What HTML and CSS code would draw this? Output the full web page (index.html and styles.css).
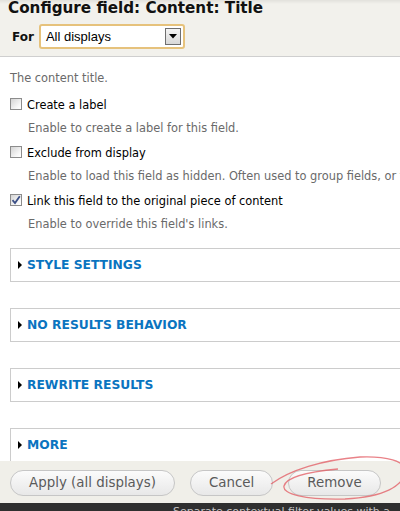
FILE: index.html
```html
<!DOCTYPE html>
<html>
<head>
<meta charset="utf-8">
<link rel="stylesheet" href="styles.css">
</head>
<body>
<div class="page">
  <header class="head">
    <h1 class="title">Configure field: Content: Title</h1>
    <div class="for-row">
      <span class="for">For</span>
      <div class="select">
        <span class="sel-text">All displays</span>
        <span class="sel-btn"><svg width="8" height="5" viewBox="0 0 8 5"><path d="M0 0H8L4 4.5Z" fill="#000"/></svg></span>
      </div>
    </div>
  </header>
  <main class="content">
    <p class="desc lead">The content title.</p>
    <div class="item">
      <div class="check-row"><span class="cb"></span><span class="label">Create a label</span></div>
      <p class="desc sub">Enable to create a label for this field.</p>
    </div>
    <div class="item">
      <div class="check-row"><span class="cb"></span><span class="label">Exclude from display</span></div>
      <p class="desc sub">Enable to load this field as hidden. Often used to group fields, or to use as token in another field.</p>
    </div>
    <div class="item">
      <div class="check-row"><span class="cb checked"><svg width="10" height="10" viewBox="0 0 10 10"><path d="M1.5 5.2L4 8L8.8 1.2" fill="none" stroke="#3b4f86" stroke-width="1.8"/></svg></span><span class="label">Link this field to the original piece of content</span></div>
      <p class="desc sub">Enable to override this field's links.</p>
    </div>
    <div class="fs-list">
      <div class="fs"><span class="tri"></span><span class="legend">STYLE SETTINGS</span></div>
      <div class="fs"><span class="tri"></span><span class="legend">NO RESULTS BEHAVIOR</span></div>
      <div class="fs"><span class="tri"></span><span class="legend">REWRITE RESULTS</span></div>
      <div class="fs"><span class="tri"></span><span class="legend">MORE</span></div>
    </div>
  </main>
  <footer class="bar">
    <button class="btn">Apply (all displays)</button>
    <button class="btn">Cancel</button>
    <button class="btn">Remove</button>
  </footer>
  <div class="strip">Separate contextual filter values with a</div>
  <svg class="annot" width="400" height="511" viewBox="0 0 400 511">
    <path d="M271 484 C290 470 322 460 360 457 C386 456 406 461 405 471 C404 486 384 497 345 499 C305 500 282 494 284 486 C286 478 306 472 338 469" fill="none" stroke="rgba(226,88,96,0.75)" stroke-width="1.3"/>
  </svg>
</div>
</body>
</html>
```

FILE: styles.css
```css
html, body {
  margin: 0;
  padding: 0;
}
body {
  width: 400px;
  height: 511px;
  overflow: hidden;
  background: #fff;
  font-family: "DejaVu Sans", Verdana, sans-serif;
}
.page {
  position: relative;
  width: 400px;
  height: 511px;
  overflow: hidden;
  white-space: nowrap;
}
.head {
  background: linear-gradient(#e2e1dc 0px, #f2f1ec 4px, #f2f1ec 100%);
  padding: 0 0 7px 8px;
  border-bottom: 1px solid #cfcfcf;
}
.title {
  margin: 0;
  font: bold 15.2px/16px "DejaVu Sans", Verdana, sans-serif;
  color: #111;
}
.for-row {
  display: flex;
  align-items: center;
  margin-top: 8px;
  padding-left: 4px;
  gap: 5px;
}
.for {
  font: bold 12px/14px "DejaVu Sans", Verdana, sans-serif;
  color: #111;
}
.select {
  box-sizing: border-box;
  width: 146px;
  height: 25px;
  border: 2px solid #e6c27c;
  border-radius: 3px;
  background: #fff;
  display: flex;
  align-items: center;
  padding-left: 5px;
}
.sel-text {
  font: 13px/16px "Liberation Sans", Arial, sans-serif;
  color: #000;
}
.sel-btn {
  margin-left: auto;
  margin-right: 2px;
  box-sizing: border-box;
  width: 16px;
  height: 17px;
  border: 1px solid #6f6f6f;
  background: linear-gradient(#f4f4f4, #d8d8d8);
  display: flex;
  align-items: center;
  justify-content: center;
}
.content {
  box-sizing: border-box;
  height: 404px;
  overflow: hidden;
  padding: 14px 0 0 10px;
}
.desc {
  margin: 0;
  font: 11.4px/14px "DejaVu Sans", Verdana, sans-serif;
  color: #6a6a6a;
}
.lead {
  margin-bottom: 13px;
}
.item {
  margin-bottom: 11px;
}
.check-row {
  display: flex;
  align-items: center;
  height: 14px;
}
.cb {
  box-sizing: border-box;
  width: 12px;
  height: 12px;
  margin-top: -2px;
  margin-right: 5px;
  border: 1px solid #8c8c8c;
  background: linear-gradient(135deg, #d4d4d4, #f7f7f7 70%, #fff);
  display: flex;
  align-items: center;
  justify-content: center;
}
.label {
  font: 11.4px/14px "DejaVu Sans", Verdana, sans-serif;
  color: #000;
}
.sub {
  margin-top: 9px;
  padding-left: 18px;
}
.fs-list {
  margin-top: 17px;
}
.fs {
  box-sizing: border-box;
  width: 430px;
  height: 34px;
  border: 1px solid #cccccc;
  margin-bottom: 26px;
  display: flex;
  align-items: center;
  padding-left: 7px;
}
.tri {
  width: 0;
  height: 0;
  border-top: 4px solid transparent;
  border-bottom: 4px solid transparent;
  border-left: 4px solid #000;
  margin-right: 5px;
}
.legend {
  font: bold 12.3px/14px "DejaVu Sans", Verdana, sans-serif;
  color: #0a74c0;
}
.bar {
  box-sizing: border-box;
  height: 42px;
  background: #f0efe9;
  padding: 9px 0 0 10px;
  display: flex;
  align-items: flex-start;
  gap: 15px;
}
.btn {
  box-sizing: border-box;
  height: 26px;
  padding: 0 18px;
  border: 1px solid #c6c6c6;
  border-radius: 13px;
  background: linear-gradient(#fbfbfb, #e8e8e8);
  font: 13.4px/24px "DejaVu Sans", Verdana, sans-serif;
  color: #5a5a5a;
  margin: 0;
}
.strip {
  height: 8px;
  background: #2f2f2f;
  padding-left: 173px;
  overflow: hidden;
  font: 11px/17px "DejaVu Sans", Verdana, sans-serif;
  color: #c4c4c4;
}
.annot {
  position: absolute;
  left: 0;
  top: 0;
  pointer-events: none;
}
```
